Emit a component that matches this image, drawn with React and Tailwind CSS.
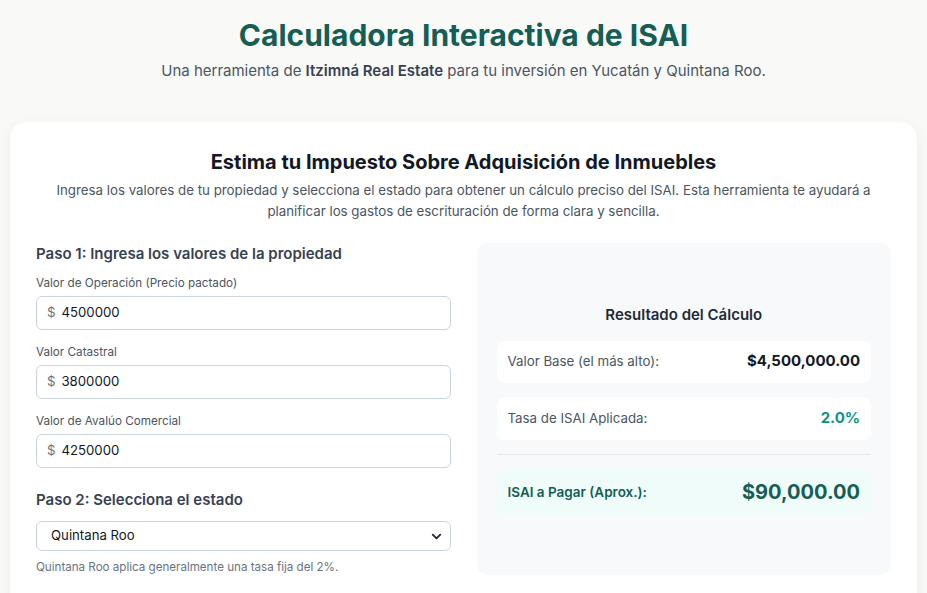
import { ChevronDown } from "lucide-react";

const fields = [
  { label: "Valor de Operación (Precio pactado)", value: "4500000" },
  { label: "Valor Catastral", value: "3800000" },
  { label: "Valor de Avalúo Comercial", value: "4250000" },
];

const App = () => {
  return (
    <div className="min-h-screen bg-[#f9f9f7] font-['Inter',sans-serif] px-[10px] pt-[17px]">
      {/* Header */}
      <header className="text-center">
        <h1 className="text-[30px] leading-[36px] font-bold text-[#155e56]">
          Calculadora Interactiva de ISAI
        </h1>
        <p className="mt-[6px] text-[15px] leading-6 text-[#4b5563]">
          Una herramienta de <strong className="font-semibold text-[#374151]">Itzimná Real Estate</strong> para tu inversión en Yucatán y Quintana Roo.
        </p>
      </header>

      {/* Card */}
      <main className="mt-[39px] bg-white rounded-2xl shadow-[0_4px_14px_rgba(0,0,0,0.06)] px-[26px] pt-[26px] pb-8">
        <h2 className="text-center text-[20px] leading-7 font-bold text-[#111827]">
          Estima tu Impuesto Sobre Adquisición de Inmuebles
        </h2>
        <p className="mt-1 text-center text-[13.3px] leading-[21px] text-[#4b5563] px-2">
          Ingresa los valores de tu propiedad y selecciona el estado para obtener un cálculo preciso del ISAI. Esta herramienta te ayudará a planificar los gastos de escrituración de forma clara y sencilla.
        </p>

        <div className="mt-5 grid grid-cols-2 gap-[26px]">
          {/* Left column */}
          <div>
            <h3 className="text-[15px] leading-6 font-semibold text-[#374151]">
              Paso 1: Ingresa los valores de la propiedad
            </h3>
            <div className="mt-[9px] flex flex-col gap-[14px]">
              {fields.map((f) => (
                <div key={f.label}>
                  <label className="block text-[11.7px] leading-4 text-[#4b5563] mb-[5px]">{f.label}</label>
                  <div className="flex items-center h-[34px] border border-[#cbd5e1] rounded-md px-[10px] text-[13.2px]">
                    <span className="text-[#6b7280] mr-[6px]">$</span>
                    <span className="text-[#111827]">{f.value}</span>
                  </div>
                </div>
              ))}
            </div>

            <h3 className="mt-5 text-[15px] leading-6 font-semibold text-[#374151]">
              Paso 2: Selecciona el estado
            </h3>
            <div className="mt-[9px] flex items-center justify-between h-[30px] border border-[#cbd5e1] rounded-md pl-[14px] pr-[6px] text-[13.2px] text-[#111827]">
              <span>Quintana Roo</span>
              <ChevronDown size={15} strokeWidth={3} className="text-[#1f2937]" />
            </div>
            <p className="mt-2 text-[11.6px] leading-4 text-[#6b7280]">
              Quintana Roo aplica generalmente una tasa fija del 2%.
            </p>
          </div>

          {/* Right column */}
          <div className="bg-[#f8f9fb] rounded-xl px-5 flex flex-col justify-center">
            <h3 className="text-center text-[15px] leading-6 font-semibold text-[#1f2937]">
              Resultado del Cálculo
            </h3>
            <div className="mt-[14px] flex flex-col gap-[15px]">
              <div className="bg-white rounded-lg h-[42px] px-[11px] flex items-center justify-between">
                <span className="text-[13.3px] text-[#4b5563]">Valor Base (el más alto):</span>
                <span className="text-[15px] font-bold text-[#111827]">$4,500,000.00</span>
              </div>
              <div className="bg-white rounded-lg h-[42px] px-[11px] flex items-center justify-between">
                <span className="text-[13.3px] text-[#4b5563]">Tasa de ISAI Aplicada:</span>
                <span className="text-[15px] font-bold text-[#0d9488]">2.0%</span>
              </div>
            </div>
            <div className="mt-[14px] border-t border-[#e5e7eb]" />
            <div className="mt-[15px] bg-[#effcf9] rounded-lg h-[45px] px-[11px] flex items-center justify-between">
              <span className="text-[13.5px] font-semibold text-[#155e56]">ISAI a Pagar (Aprox.):</span>
              <span className="text-[20px] font-bold text-[#155e56]">$90,000.00</span>
            </div>
          </div>
        </div>
      </main>
    </div>
  );
};

export default App;
